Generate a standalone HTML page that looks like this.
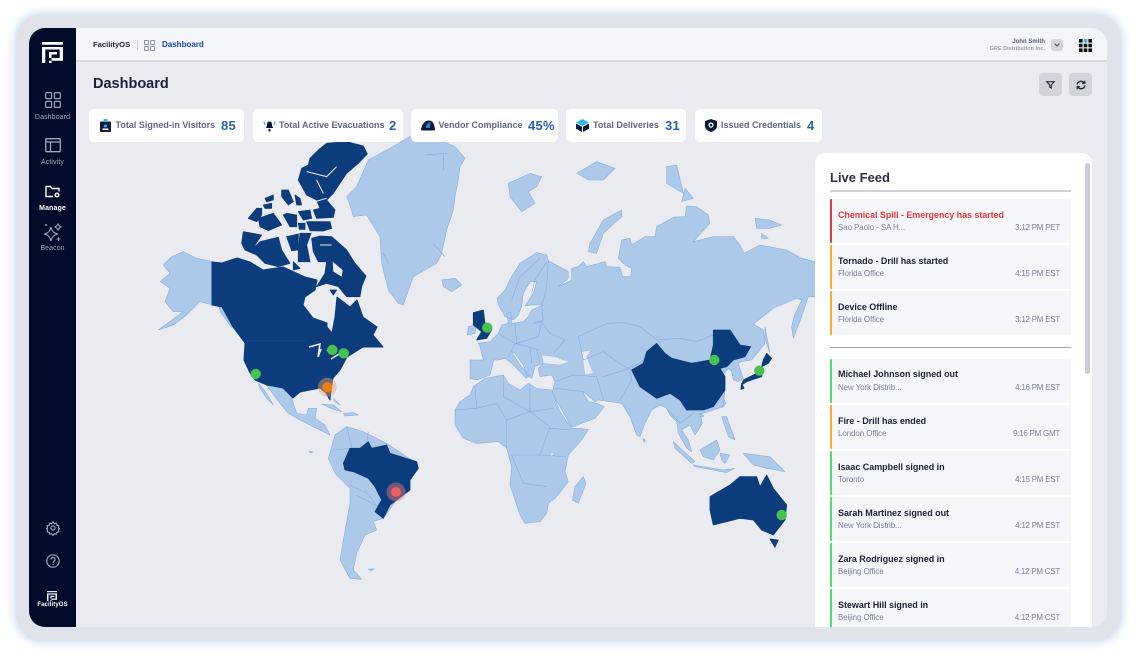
<!DOCTYPE html>
<html><head><meta charset="utf-8"><style>
*{box-sizing:border-box;margin:0;padding:0}
html,body{width:1136px;height:655px;overflow:hidden;background:#fff;font-family:"Liberation Sans",sans-serif}
.abs,.t{position:absolute;white-space:nowrap}
#frame{position:absolute;left:16px;top:14px;width:1105px;height:627px;border-radius:26px;background:#e0e3eb;box-shadow:0 0 9px 2px #cbdff5}
#app{position:absolute;left:29px;top:28px;width:1078px;height:599px;border-radius:16px;background:#e9ebf1;overflow:hidden}
#side{position:absolute;left:29px;top:28px;width:47px;height:599px;background:#020c2a;border-radius:16px 0 0 16px}
#head{position:absolute;left:76px;top:28px;width:1031px;height:34px;background:#f4f5f8;border-radius:0 16px 0 0;border-bottom:2px solid #d5d7dd}
.sl{position:absolute;left:29px;width:47px;text-align:center;font-size:7px;color:#a2a7b6;letter-spacing:.1px}
.card{position:absolute;top:109px;height:33px;background:#fff;border-radius:5px}
.cl{position:absolute;top:120px;font-size:9px;font-weight:bold;color:#5d6885;white-space:nowrap;line-height:11px}
.cn{position:absolute;top:118px;font-size:13px;font-weight:bold;color:#2563ae;line-height:16px;white-space:nowrap;letter-spacing:.3px}
#panel{position:absolute;left:815px;top:153px;width:277px;height:474px;background:#fff;border-radius:10px 10px 0 0;overflow:hidden}
.it{position:absolute;left:15px;width:241px;height:44px;background:#f5f6f9;border-left:2px solid #4fe06a;border-radius:1px}
.it b{position:absolute;left:6px;top:11px;font-size:9px;line-height:11px;color:#1c2235;white-space:nowrap;letter-spacing:-.04px}
.it i{position:absolute;left:6px;top:24px;font-size:8px;line-height:10px;font-style:normal;color:#7a819a;white-space:nowrap;letter-spacing:-.1px}
.it u{position:absolute;right:11px;top:24px;font-size:8px;line-height:10px;text-decoration:none;color:#7a819a;white-space:nowrap;letter-spacing:-.25px}
.o{border-left-color:#ffa92b}.r{border-left-color:#e53b44}
svg{position:absolute;overflow:visible}
.L{fill:#adc9e9;stroke:#7fa9dc;stroke-width:1.6;stroke-linejoin:round}
.D polygon,polygon.D{fill:#0c3c7b;stroke:#0c3c7b;stroke-width:2.5;stroke-linejoin:round}
.B{fill:none;stroke:#7fa9dc;stroke-width:1.6;stroke-linejoin:round}
</style></head><body>
<div id="frame"></div>
<div id="app"></div>

<svg style="left:0;top:0" width="1136" height="655" viewBox="0 0 1136 655">
<defs><clipPath id="mc"><rect x="76" y="62" width="739" height="565"/></clipPath></defs>
<g clip-path="url(#mc)">
<!-- z7 frame: North America north, Greenland -->
<g transform="translate(150,130) scale(.3333)">
<polygon class="L" points="187,395 140,385 100,365 65,380 40,405 60,430 30,455 60,475 45,515 70,545 100,545 60,575 25,600 70,585 110,555 150,515 187,525 215,530 250,580 245,592 210,545"/>
<polygon class="L" points="590,200 620,170 640,125 655,90 720,55 780,20 820,35 880,35 915,50 945,85 930,110 925,150 915,200 910,240 890,300 875,370 860,400 790,440 760,525 745,520 715,480 695,400 690,320 650,255 610,260 600,225"/>
<path d="M825,75 L890,70 M880,75 L880,120 M850,340 L885,380 M700,370 L715,400" stroke="#7fa9dc" stroke-width="2" fill="none"/>
<g class="D">
<polygon points="530,40 590,35 640,48 652,72 625,100 590,130 570,160 550,190 530,210 555,240 550,262 500,265 490,240 510,235 500,210 470,195 445,150 455,115 475,105 480,85 505,60"/>
<polygon points="395,180 415,180 430,215 415,225 395,200"/><polygon points="435,195 450,205 455,225 440,225"/>
<polygon points="345,205 370,195 370,210 350,215"/><polygon points="340,225 365,220 365,235 345,235"/>
<polygon points="295,265 320,235 335,235 335,255 320,275"/>
<polygon points="325,265 370,250 385,270 395,285 355,302 330,290"/>
<polygon points="400,255 410,250 440,255 440,290 420,290"/>
<polygon points="445,245 480,240 485,265 460,270"/>
<polygon points="470,275 540,275 545,295 520,303 480,302"/>
<polygon points="445,280 465,280 465,298 448,298"/>
<polygon points="280,305 335,315 315,345 320,375 285,360 275,340"/>
<polygon points="330,335 385,322 395,360 420,400 385,410 345,400 315,370 315,350"/>
<polygon points="410,320 445,312 445,360 425,362"/>
<polygon points="450,310 483,310 470,345 480,395 445,395 445,365"/>
<polygon points="485,325 510,318 545,320 590,360 615,400 648,438 635,470 630,500 590,500 565,470 530,460 500,470 525,430 530,395 505,395 490,365"/>
<polygon points="430,395 450,415 430,420"/><polygon points="540,480 560,480 550,495"/>
</g>
<path d="M470,125 L530,140 L560,110 M500,150 L520,190 M495,215 L530,205 M510,345 L545,345" stroke="#e9ebf1" stroke-width="3" fill="none"/>
<polygon points="548,395 578,420 575,440 550,425" fill="#e9ebf1"/>
</g>
<!-- mexico, south america -->
<g transform="translate(250,370) scale(.3333)">
<polygon class="L" points="30,20 130,60 125,85 140,130 170,135 175,115 200,115 195,145 225,165 240,195 200,175 150,150 115,130 90,100 60,60"/>
<polygon class="L" points="25,40 50,70 70,105 50,85 30,55"/>
<polygon class="L" points="215,102 250,105 275,125 250,118"/><polygon class="L" points="280,130 310,128 325,135 285,138"/><polygon class="L" points="250,85 270,105 255,95"/>
<polygon class="L" points="235,265 255,195 290,170 340,185 410,220 500,280 440,390 400,445 370,455 380,480 345,495 320,550 310,600 335,628 300,625 270,570 280,510 300,400 300,355 255,310"/>
<path class="B" d="M255,240 L300,235 M290,170 L305,230 M355,185 L350,215 M300,345 L350,370 M345,360 L375,400 M320,375 L385,410"/>
<polygon class="L" points="355,598 372,596 365,603"/>
<polygon class="L" points="178,244 190,246 182,249"/>
<polygon class="D" points="280,280 300,235 330,235 355,215 365,235 410,225 420,250 500,275 505,295 480,330 480,360 440,390 420,405 400,445 375,425 395,390 375,350 355,325 310,305 285,300"/>
</g>
<!-- USA+Canada main -->
<polygon class="D" style="stroke-width:1" points="212,262 212,305 222,307 233,327 245,343 244,360 250,373 255,380 267,385 283,388 293,398 300,392 320,388 326,393 330,400 331,390 333,378 340,370 347,357 363,347 383,347 373,335 377,327 363,317 357,300 350,307 337,297 335,317 332,333 327,327 327,323 313,318 303,305 305,297 315,290 317,280 305,277 283,267 263,270 250,262 237,258 222,263"/>
<path d="M245,341 L306,341" stroke="#1a4a8e" stroke-width=".7" fill="none"/>
<path d="M309,347 L320,344 L318,357 L321,349 M327,350 L332,354 M331,359 L339,354" stroke="#e9ebf1" stroke-width="1.600" fill="none"/>
<!-- Eurasia z8 frame -->
<g transform="translate(440,130) scale(.3333)">
<polygon class="L" points="5,450 45,445 65,465 35,485 10,470"/>
<polygon class="L" points="205,160 270,130 305,140 290,170 265,185 285,220 245,245 210,200"/>
<polygon class="L" points="410,130 470,95 525,115 490,150 445,150"/>
<polygon class="L" points="680,110 710,105 730,190 680,160"/><polygon class="L" points="735,175 760,205 725,215"/>
<polygon class="L" points="450,340 490,270 545,240 545,260 490,310 470,370 445,365"/>
<polygon class="L" points="945,265 990,270 1025,285 990,295 950,295"/><polygon class="L" points="965,310 985,325 965,325"/>
<polygon class="L" points="175,525 172,505 195,480 215,440 240,400 290,368 320,375 325,392 385,425 385,445 355,470 395,450 395,415 415,410 430,395 440,410 495,395 500,410 540,412 548,440 572,440 575,415 555,405 535,385 545,330 570,325 575,345 615,320 645,320 650,290 700,262 735,260 740,228 770,230 805,255 810,280 760,335 820,320 880,320 900,345 912,370 960,345 1040,360 1085,385 1125,395 1130,500 1105,500 1085,560 1060,625 1055,590 1062,560 1085,510 1070,505 1000,535 940,582 970,600 975,640 960,660 935,690 905,695 895,700 910,745 895,755 880,750 875,725 865,715 850,735 855,780 850,830 790,850 780,850 787,880 765,915 750,885 725,900 745,930 755,965 740,955 715,910 710,875 690,855 680,835 660,825 635,840 615,880 600,920 590,915 570,860 545,820 510,815 475,810 465,815 430,785 430,790 445,815 470,820 493,830 465,865 395,892 340,795 338,780 345,755 335,735 300,740 295,715 310,700 285,710 275,745 260,735 250,705 225,670 215,665 240,705 268,735 258,745 245,730 215,700 195,685 175,690 160,690 160,695 150,735 110,750 90,745 90,690 130,690 120,650 115,640 150,635 175,610 185,585 205,580 200,550 212,548 215,580 250,575 265,560 275,540 310,525 275,525 255,528 280,490 290,455 270,455 250,490 245,530 235,555 220,570 195,560"/>
<polygon class="L" points="85,590 110,585 105,610 82,615"/>
<polygon class="L" points="975,590 990,670 975,625"/>
<path fill="#e9ebf1" stroke="#7fa9dc" stroke-width="1" d="M305,675 L345,680 L370,690 L390,695 L360,705 L310,700Z M425,665 L455,660 L440,680 L460,730 L435,735 L430,700Z"/>
<path class="B" d="M215,510 L240,440 L300,385 M275,490 L285,450 L320,395 M325,390 L320,470 L305,530 L310,570 L280,580 M280,580 L305,575 L330,610 L375,630 L340,670 M175,610 L225,640 L205,680 M225,580 L230,640 M230,640 L295,620 L305,575 M225,640 L300,660 M415,620 L500,580 L550,578 L600,590 L650,630 L720,625 L770,635 L820,615 M415,620 L430,690 L490,665 L560,715 L600,700 L650,650 M400,735 L470,740 L490,810 M490,740 L570,715 L575,750 L540,810 M345,755 L400,735 M345,775 L430,785 M680,835 L720,880 L760,850 M300,700 L290,660 M270,650 L275,700"/>
<g class="D"><polygon points="100,548 130,540 135,580 155,600 140,625 110,630 125,605 100,585"/></g>
</g>
<!-- z10 frame: Africa, China etc -->
<g transform="translate(540,340) scale(.3333)">
<polygon class="L" points="-255,210 -240,185 -210,165 -200,140 -165,115 -110,105 -95,130 -60,150 -35,130 -10,145 35,150 60,215 95,265 145,268 125,300 85,345 75,395 85,425 45,475 25,490 20,520 0,545 -45,550 -60,525 -90,435 -85,380 -100,325 -125,305 -190,310 -230,295 -255,255"/>
<path class="B" d="M-195,140 L-190,205 L-130,190 L-100,240 L-30,215 L-30,130 M-100,240 L-100,325 M-30,215 L30,260 L0,345 L-85,345 M40,205 L-30,215 M0,345 L75,350 M-85,345 L-50,430 L20,440 M30,265 L95,270 M-110,105 L-110,170 L-30,215 M-190,205 L-255,210"/>
<path d="M35,335 L42,345 L30,348Z" fill="#e9ebf1" stroke="#7fa9dc"/>
<polygon class="L" points="130,410 138,430 115,490 97,480 105,440"/>
<polygon class="L" points="308,295 316,300 312,308"/>
<polygon class="L" points="400,305 465,365 455,370 405,325"/>
<polygon class="L" points="460,375 550,390 585,385 560,398 465,380"/>
<polygon class="L" points="480,330 530,300 540,330 520,360 490,350"/>
<polygon class="L" points="540,340 570,345 555,370 545,360"/>
<polygon class="L" points="545,230 560,230 585,300 565,290"/>
<polygon class="L" points="610,340 690,350 735,395 680,385 640,375"/>
<polygon class="L" points="553,180 558,190 546,202"/>
<polygon class="L" points="480,220 492,228 482,232"/>
<g class="D">
<polygon points="520,-30 570,-30 600,15 632,20 615,50 580,60 560,80 540,85 555,110 555,150 520,200 490,210 440,210 420,180 390,160 350,175 300,140 275,90 310,70 320,35 350,10 375,40 395,55 455,70 510,60 520,15"/>
<polygon points="670,60 680,40 695,55 685,70 665,80"/>
<polygon points="670,85 665,110 620,125 605,135 610,120 650,100"/>
<polygon points="605,130 612,145 603,148"/>
<polygon points="510,470 570,435 600,410 650,410 660,440 680,405 700,445 740,495 735,540 700,585 665,570 640,540 600,535 520,555 510,510"/>
<polygon points="690,597 715,600 705,622"/>
</g>
</g>
</g>
<!-- markers -->
<g fill="#46c24e">
<circle cx="332.3" cy="350" r="5.2"/><circle cx="343.7" cy="353.3" r="5.2"/><circle cx="255.7" cy="374" r="5.2"/>
<circle cx="487.3" cy="327.7" r="5.2"/><circle cx="714.3" cy="360" r="5.2"/><circle cx="759.3" cy="370.7" r="5.2"/><circle cx="781.7" cy="515" r="5.2"/>
</g>
<circle cx="327.3" cy="387.3" r="9.5" fill="#f3a46a" fill-opacity=".45"/><circle cx="327.3" cy="387.3" r="5" fill="#ef7d0f"/>
<circle cx="396" cy="492" r="9.5" fill="#f0787a" fill-opacity=".45"/><circle cx="396" cy="492" r="5" fill="#ea5f5d"/>
</svg>

<div id="side"></div>
<div id="head"></div>
<!-- logo -->
<svg style="left:42px;top:42px" width="21" height="21" viewBox="0 0 21 21" fill="#fff">
<path d="M0 0h21v2.700H0zM0 5h21v13.700H7V21h2.500v-5h8.200V7.500H3.300V21H0zM7 10h8v2.500H9.500V16H7z"/>
</svg>
<!-- side icons -->
<svg style="left:45px;top:92px" width="16" height="16" viewBox="0 0 16 16" fill="none" stroke="#a2a7b6" stroke-width="1.2"><rect x=".6" y=".6" width="6" height="6" rx="1.2"/><rect x="9.400" y=".6" width="6" height="6" rx="1.2"/><rect x=".6" y="9.400" width="6" height="6" rx="1.2"/><rect x="9.400" y="9.400" width="6" height="6" rx="1.2"/></svg>
<div class="sl" style="top:113px;line-height:9px">Dashboard</div>
<svg style="left:45px;top:138px" width="16" height="15" viewBox="0 0 16 15" fill="none" stroke="#a2a7b6" stroke-width="1.3"><rect x=".7" y=".7" width="14.600" height="13" rx="1"/><path d="M.7 4h14.600M5.500 4v9.700"/></svg>
<div class="sl" style="top:158px;line-height:9px">Activity</div>
<svg style="left:45px;top:185px" width="16" height="14" viewBox="0 0 16 14" fill="none" stroke="#fff" stroke-width="1.400"><path d="M8 11.500H1V1.500h4.500l1.500 2h7v3"/><circle cx="12" cy="10" r="2.500" fill="#fff" stroke="none"/><circle cx="12" cy="10" r="1" fill="#020c2a" stroke="none"/></svg>
<div class="sl" style="top:204px;line-height:9px;color:#fff;font-weight:bold">Manage</div>
<svg style="left:43px;top:222px" width="20" height="20" viewBox="0 0 20 20" fill="none" stroke="#a2a7b6" stroke-width="1"><path d="M8 5 Q9 11 15 12 Q9 13 8 19 Q7 13 1 12 Q7 11 8 5Z"/><path d="M15 1.500 Q15.500 4 18 5 Q15.500 6 15 8.500 Q14.500 6 12 5 Q14.500 4 15 1.500Z"/><path d="M15.500 15v4M13.500 17h4M3 2v2M2 3h2"/></svg>
<div class="sl" style="top:244px;line-height:9px">Beacon</div>
<svg style="left:46px;top:521px" width="14" height="14" viewBox="0 0 24 24" fill="none" stroke="#a2a7b6" stroke-width="2"><circle cx="12" cy="12" r="3.500"/><path d="M12 1.500l2 3 3.500-.8 1 3.500 3.500 1-.8 3.800 2 1-2 2.500.8 3-3.500 1.200-1 3-3.500-.7-2 2.500-2-2.500-3.500.7-1-3-3.500-1.200.8-3-2-2.500 2-1-.8-3.800 3.500-1 1-3.500 3.500.8z"/></svg>
<svg style="left:46px;top:554px" width="14" height="14" viewBox="0 0 14 14" fill="none" stroke="#a2a7b6" stroke-width="1.200"><circle cx="7" cy="7" r="6.200"/><path d="M5 5.500a2 2 0 1 1 3 1.700c-.7.400-1 .8-1 1.500"/><circle cx="7" cy="10.500" r=".7" fill="#a2a7b6" stroke="none"/></svg>
<svg style="left:47px;top:590.500px" width="10" height="10" viewBox="0 0 21 21" fill="#e4e6ec"><path d="M0 0h21v2.700H0zM0 5h21v13.700H7V21h2.500v-5h8.200V7.500H3.300V21H0zM7 10h8v2.500H9.500V16H7z"/></svg>
<div class="sl" style="top:601px;line-height:8px;font-size:6px;font-weight:bold;color:#fff">FacilityOS</div>

<!-- header -->
<div class="t" style="left:93px;top:40px;font-size:7.600px;line-height:10px;font-weight:bold;color:#20263c">FacilityOS</div>
<div class="abs" style="left:137px;top:40px;width:1px;height:10px;background:#c9ccd4"></div>
<svg style="left:144px;top:40px" width="11" height="11" viewBox="0 0 11 11" fill="none" stroke="#7b8298" stroke-width=".8"><rect x=".5" y=".5" width="4" height="4"/><rect x="6.500" y=".5" width="4" height="4"/><rect x=".5" y="6.500" width="4" height="4"/><rect x="6.500" y="6.500" width="4" height="4"/></svg>
<div class="t" style="left:162px;top:40px;font-size:8px;line-height:10px;font-weight:bold;color:#1247a8">Dashboard</div>
<div class="t" style="right:91px;top:39px;font-size:6px;line-height:7px;font-weight:bold;color:#555c72">John Smith</div>
<div class="t" style="right:91px;top:46px;font-size:5.500px;line-height:7px;color:#9a9fae;font-weight:bold">GRE Distribution Inc.</div>
<div class="abs" style="left:1051px;top:39px;width:12px;height:12px;background:#d4d6dc;border-radius:3px"></div>
<svg style="left:1054px;top:43px" width="6" height="4" viewBox="0 0 6 4" fill="none" stroke="#4c5266" stroke-width="1"><path d="M.5 .5L3 3 5.500 .5"/></svg>
<svg style="left:1079px;top:38.500px" width="13" height="13" viewBox="0 0 13 13" fill="#111"><rect width="3.600" height="3.600"/><rect x="4.700" width="3.600" height="3.600" fill="#2fb5ee"/><rect x="9.400" width="3.600" height="3.600"/><rect y="4.700" width="3.600" height="3.600"/><rect x="4.700" y="4.700" width="3.600" height="3.600"/><rect x="9.400" y="4.700" width="3.600" height="3.600"/><rect y="9.400" width="3.600" height="3.600"/><rect x="4.700" y="9.400" width="3.600" height="3.600"/><rect x="9.400" y="9.400" width="3.600" height="3.600"/></svg>

<div class="t" style="left:93px;top:75px;font-size:14.500px;line-height:18px;font-weight:bold;color:#1c2235">Dashboard</div>
<div class="abs" style="left:1039px;top:73px;width:23px;height:23px;background:#d2d4da;border-radius:4px"></div>
<div class="abs" style="left:1069px;top:73px;width:23px;height:23px;background:#d2d4da;border-radius:4px"></div>
<svg style="left:1046px;top:81px" width="9" height="8" viewBox="0 0 9 8" fill="none" stroke="#2a3040" stroke-width="1.200"><path d="M.8 .7h7.400L5.300 4v3l-1.600-.8V4z"/></svg>
<svg style="left:1076px;top:80px" width="10" height="10" viewBox="0 0 10 10" fill="none" stroke="#1f2535" stroke-width="1.400"><path d="M1 4.500A4 4 0 0 1 8.200 3M9 5.500A4 4 0 0 1 1.800 7"/><path d="M8.800 .8v2.700H6.100M1.200 9.200V6.500h2.700" stroke-width="1.100"/></svg>

<!-- cards -->
<div class="card" style="left:89px;width:155px"></div>
<div class="card" style="left:253px;width:150px"></div>
<div class="card" style="left:411px;width:147px"></div>
<div class="card" style="left:566px;width:120px"></div>
<div class="card" style="left:695px;width:127px"></div>
<svg style="left:100px;top:119px" width="11" height="13" viewBox="0 0 11 13"><rect y="2.500" width="11" height="10.500" rx="1" fill="#0d1a3a"/><rect x="3.500" width="4" height="3" fill="#2fb5ee"/><circle cx="5.500" cy="7" r="1.500" fill="#2fb5ee"/><rect x="2.500" y="9.500" width="6" height="1.500" fill="#fff"/></svg>
<div class="cl" style="left:115.500px">Total Signed-in Visitors</div><div class="cn" style="left:221px">85</div>
<svg style="left:263px;top:120px" width="13" height="12" viewBox="0 0 13 12" fill="none"><path d="M6.500 1.500c2 0 2.500 1.500 2.500 3.500l1 3H3l1-3c0-2 .5-3.500 2.500-3.500z" fill="#0d1a3a"/><rect x="5.500" y="9" width="2" height="2.500" fill="#0d1a3a"/><path d="M1 1.500L2 5M12 1.500L11 5" stroke="#2fb5ee" stroke-width="1.300"/></svg>
<div class="cl" style="left:279px">Total Active Evacuations</div><div class="cn" style="left:389px">2</div>
<svg style="left:421px;top:120px" width="14" height="11" viewBox="0 0 14 11"><path d="M0 9.500C1 4 4 .5 8 .5s5.500 4 6 9z" fill="#0d1a3a"/><path d="M5 8C5 4.500 7 2.500 9.500 2L9 8z" fill="#2d7fd4"/><rect y="8.500" width="14" height="2" rx="1" fill="#0d1a3a"/></svg>
<div class="cl" style="left:438.500px">Vendor Compliance</div><div class="cn" style="left:528px">45%</div>
<svg style="left:576px;top:119px" width="13" height="13" viewBox="0 0 13 13"><path d="M0 3.500L6.500 0 13 3.500 6.500 7z" fill="#2fb5ee"/><path d="M0 4.500l6 3.200V13L0 9.800zM13 4.500L7 7.700V13l6-3.200z" fill="#0d1a3a"/></svg>
<div class="cl" style="left:593px">Total Deliveries</div><div class="cn" style="left:665px">31</div>
<svg style="left:705px;top:119px" width="12" height="13" viewBox="0 0 12 13"><path d="M6 0l6 2v5c0 3-3 5-6 6-3-1-6-3-6-6V2z" fill="#0d1a3a"/><circle cx="6" cy="6" r="2.600" fill="#fff"/><circle cx="6" cy="6" r="1.300" fill="#0d1a3a"/></svg>
<div class="cl" style="left:721px">Issued Credentials</div><div class="cn" style="left:807px">4</div>

<!-- panel -->
<div id="panel">
<div class="t" style="left:15px;top:17px;font-size:13px;line-height:15px;font-weight:bold;color:#2a3045">Live Feed</div>
<div class="abs" style="left:15px;top:37px;width:241px;height:1.500px;background:#d0d2d8"></div>
<div class="abs" style="left:270px;top:10px;width:5px;height:211px;background:#c9ccd5;border-radius:3px"></div>
<div class="it r" style="top:46px"><b style="color:#e5383f;letter-spacing:-.07px">Chemical Spill - Emergency has started</b><i>Sao Paolo - SA H...</i><u>3:12 PM PET</u></div>
<div class="it o" style="top:92px"><b>Tornado - Drill has started</b><i>Florida Office</i><u>4:15 PM EST</u></div>
<div class="it o" style="top:138px"><b>Device Offline</b><i>Florida Office</i><u>3:12 PM EST</u></div>
<div class="abs" style="left:15px;top:194px;width:241px;height:1px;background:#a3a6b0"></div>
<div class="it" style="top:206px"><b style="top:10px">Michael Johnson signed out</b><i>New York Distrib...</i><u>4:16 PM EST</u></div>
<div class="it o" style="top:252px"><b>Fire - Drill has ended</b><i>London Office</i><u>9:16 PM GMT</u></div>
<div class="it" style="top:298px"><b>Isaac Campbell signed in</b><i>Toronto</i><u>4:15 PM EST</u></div>
<div class="it" style="top:344px"><b>Sarah Martinez signed out</b><i>New York Distrib...</i><u>4:12 PM EST</u></div>
<div class="it" style="top:390px"><b>Zara Rodriguez signed in</b><i>Beijing Office</i><u>4:12 PM CST</u></div>
<div class="it" style="top:436px"><b>Stewart Hill signed in</b><i>Beijing Office</i><u>4:12 PM CST</u></div>
</div>
</body></html>
